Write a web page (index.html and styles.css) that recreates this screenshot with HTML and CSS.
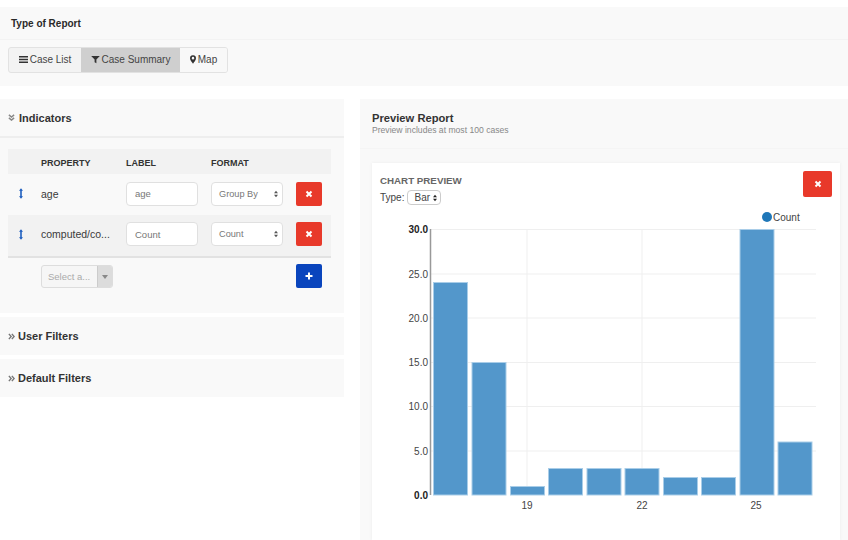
FILE: index.html
```html
<!DOCTYPE html>
<html>
    <head>
        <meta charset="utf-8">
        <title>Report Builder</title>
        <link rel="stylesheet" href="styles.css">
    </head>
    <body>
        <svg class="defs" width="0" height="0">
            <symbol id="updown" viewBox="0 0 6 10"><path d="M3 0L6 4H0zM3 10L0 6H6z"/></symbol>
            <symbol id="close" viewBox="0 0 8 8"><path d="M1.5 1.5L6.500 6.500M6.500 1.5L1.5 6.500" stroke="#fff" stroke-width="2"/></symbol>
            <symbol id="drag" viewBox="0 0 5 13"><path d="M2.5 0L5 3H3.500V10H5L2.5 13L0 10H1.500V3H0z"/></symbol>
            <symbol id="chevrons-right" viewBox="0 0 8 8"><path d="M1 1L3.600 4L1 7M4.400 1L7 4L4.400 7" fill="none" stroke="#777" stroke-width="1.600"/></symbol>
            <symbol id="chevrons-down" viewBox="0 0 8 8"><path d="M1 1L4 3.600L7 1M1 4.400L4 7L7 4.400" fill="none" stroke="#888" stroke-width="1.600"/></symbol>
        </svg>

        <div class="type-panel">
            <div class="type-head">Type of Report</div>
            <div class="type-body">
                <div class="btn-group">
                    <a class="tab tab-list">
                        <svg class="tab-icon" viewBox="0 0 10 9"><path d="M0 .5H10V2.200H0zM0 3.600H10V5.300H0zM0 6.800H10V8.500H0z"/></svg>
                        Case List
                    </a>
                    <a class="tab tab-summary active">
                        <svg class="tab-icon" viewBox="0 0 10 9"><path d="M.2 .5H9.800L6 4.400V8.800L4 7.600V4.400z"/></svg>
                        Case Summary
                    </a>
                    <a class="tab tab-map">
                        <svg class="tab-icon pin" viewBox="0 0 7 10"><path fill-rule="evenodd" d="M3.500 0A3.400 3.400 0 0 1 7 3.400C7 5.400 4.600 8.200 3.500 10 2.400 8.200 0 5.400 0 3.400A3.400 3.400 0 0 1 3.500 0zM3.500 1.900A1.500 1.500 0 1 0 3.500 4.900 1.500 1.500 0 1 0 3.500 1.900z"/></svg>
                        Map
                    </a>
                </div>
            </div>
        </div>

        <div class="main">
            <div class="left">
                <div class="section indicators">
                    <h3 class="section-head">
                        <svg class="chevrons open"><use href="#chevrons-down"/></svg>Indicators
                    </h3>
                    <div class="table">
                        <div class="row row-head">
                            <span></span>
                            <span>PROPERTY</span>
                            <span>LABEL</span>
                            <span>FORMAT</span>
                        </div>
                        <div class="row">
                            <svg class="drag"><use href="#drag"/></svg>
                            <span class="prop">age</span>
                            <input class="field" value="age">
                            <div class="field select">Group By<svg class="updown"><use href="#updown"/></svg></div>
                            <a class="btn btn-red"><svg class="btn-icon"><use href="#close"/></svg></a>
                        </div>
                        <div class="row row-alt">
                            <svg class="drag"><use href="#drag"/></svg>
                            <span class="prop">computed/co...</span>
                            <input class="field" value="Count">
                            <div class="field select">Count<svg class="updown"><use href="#updown"/></svg></div>
                            <a class="btn btn-red"><svg class="btn-icon"><use href="#close"/></svg></a>
                        </div>
                        <div class="row row-add">
                            <span></span>
                            <div class="combo">
                                <span class="combo-text">Select a...</span>
                                <span class="combo-caret"></span>
                            </div>
                            <span></span>
                            <span></span>
                            <a class="btn btn-blue">
                                <svg class="btn-icon" viewBox="0 0 8 8"><path d="M4 .5V7.500M.5 4H7.500" stroke="#fff" stroke-width="2"/></svg>
                            </a>
                        </div>
                    </div>
                </div>
                <div class="section">
                    <h3 class="section-head closed">
                        <svg class="chevrons"><use href="#chevrons-right"/></svg>User Filters
                    </h3>
                </div>
                <div class="section">
                    <h3 class="section-head closed">
                        <svg class="chevrons"><use href="#chevrons-right"/></svg>Default Filters
                    </h3>
                </div>
            </div>

            <div class="right">
                <div class="preview-head">
                    <h3>Preview Report</h3>
                    <p>Preview includes at most 100 cases</p>
                </div>
                <div class="card">
                    <div class="card-head">
                        <div class="card-left">
                            <div class="card-title">CHART PREVIEW</div>
                            <div class="type-row">
                                Type:
                                <div class="mini-select">Bar<svg class="updown dark"><use href="#updown"/></svg></div>
                            </div>
                        </div>
                        <a class="btn btn-red btn-big"><svg class="btn-icon"><use href="#close"/></svg></a>
                    </div>
                    <!-- viewBox uses page coordinates, easier to read the bars off -->
                    <svg class="chart" viewBox="372 205 468 335" width="468" height="335">
                        <circle cx="767" cy="217" r="5" fill="#1f77b8"/>
                        <text x="773" y="221" class="legend">Count</text>

                        <g class="grid">
                            <path d="M430 229.500H816M430 274H816M430 318H816M430 362.500H816M430 406.500H816M430 451H816"/>
                            <path d="M527 229V495M642 229V495M756 229V495"/>
                        </g>

                        <g class="bars">
                            <rect x="433.500" y="282.500" width="34" height="212.500"/>
                            <rect x="472" y="362.500" width="34" height="132.500"/>
                            <rect x="510.500" y="486.500" width="34" height="8.500"/>
                            <rect x="548.500" y="468.500" width="34" height="26.500"/>
                            <rect x="587" y="468.500" width="34" height="26.500"/>
                            <rect x="625" y="468.500" width="34" height="26.500"/>
                            <rect x="663.500" y="477.500" width="34" height="17.500"/>
                            <rect x="701.500" y="477.500" width="34" height="17.500"/>
                            <rect x="740" y="229.500" width="34" height="265.500"/>
                            <rect x="778" y="442" width="34" height="53"/>
                        </g>

                        <path class="axis" d="M430.500 229V495"/>

                        <g class="y-labels">
                            <text x="428" y="233" class="strong">30.0</text>
                            <text x="428" y="278">25.0</text>
                            <text x="428" y="322">20.0</text>
                            <text x="428" y="366">15.0</text>
                            <text x="428" y="410">10.0</text>
                            <text x="428" y="455">5.0</text>
                            <text x="428" y="499" class="strong">0.0</text>
                        </g>
                        <g class="x-labels">
                            <text x="527" y="509">19</text>
                            <text x="642" y="509">22</text>
                            <text x="756" y="509">25</text>
                        </g>
                    </svg>
                </div>
            </div>
        </div>
    </body>
</html>
```

FILE: styles.css
```css
*{
    margin:0px;
    padding:0px;
    box-sizing:border-box;
}
html,body{
    height:540px;
    overflow:hidden;
}
body{
    background:#fff;
    font-family:"Liberation Sans",Arial,sans-serif;
    font-size:10px;
    color:#333;
    padding-top:7px;
}
.defs{
    display:block;
    height:0;
}

/* type of report */
.type-panel{
    height:79px;
    background:#f9f9f9;
}
.type-head{
    height:33px;
    padding:11px 11px 0;
    font-size:10px;
    font-weight:bold;
    color:#2a2a2a;
    border-bottom:1px solid #f3f3f3;
}
.type-body{
    padding:7px 8px;
}
.btn-group{
    display:inline-flex;
    height:26px;
    border:1px solid #e2e2e2;
    border-radius:3px;
    background:#f3f3f3;
    overflow:hidden;
}
.tab{
    display:flex;
    align-items:center;
    justify-content:center;
    padding-bottom:1px;
    font-size:10px;
    color:#444;
}
.tab-list{
    width:72px;
}
.tab-summary{
    width:99px;
}
.tab-map{
    width:47px;
    background:#f8f8f8;
}
.tab.active{
    background:#cfcfcf;
}
.tab-icon{
    width:9px;
    height:9px;
    margin-right:2px;
    fill:#333;
}
.tab-icon.pin{
    width:6px;
}

/* two columns */
.main{
    display:flex;
    gap:16px;
    margin-top:13px;
}
.left{
    width:344px;
    display:flex;
    flex-direction:column;
    gap:4px;
}
.section{
    background:#f9f9f9;
    height:38px;
}
.section.indicators{
    height:214px;
}
.section-head{
    display:flex;
    align-items:center;
    height:39px;
    padding-left:8px;
    font-size:11px;
    font-weight:bold;
    color:#333;
    border-bottom:2px solid #eeeeee;
}
.section-head.closed{
    height:38px;
    border-bottom:none;
}
.chevrons{
    width:7px;
    height:7px;
    margin-right:3px;
}
.chevrons.open{
    margin-right:4px;
}

/* indicator table */
.table{
    margin:11px 13px 0 8px;
}
.row{
    display:grid;
    grid-template-columns:33px 85px 85px 85px 26px;
    align-items:center;
    height:41px;
    padding-bottom:2px;
    color:#3a3a3a;
}
.row-head{
    height:25px;
    padding:2px 0 0;
    background:#f2f2f2;
    font-size:9px;
    font-weight:bold;
    color:#333;
}
.row-alt{
    height:43px;
    padding-bottom:3px;
    background:#f2f2f2;
    border-bottom:2px solid #e2e2e2;
}
.row-add{
    height:36px;
    padding-bottom:0;
}
.drag{
    width:4px;
    height:11px;
    margin-left:11px;
    fill:#1f5fbf;
}
.prop{
    font-size:10.500px;
    white-space:nowrap;
}
.field{
    width:72px;
    height:24px;
    padding:0 8px;
    border:1px solid #e0e0e0;
    border-radius:4px;
    background:#fff;
    font-family:inherit;
    font-size:9.500px;
    color:#777;
}
.select{
    display:flex;
    align-items:center;
    justify-content:space-between;
    padding:0 4px 0 7px;
    font-size:9.200px;
}
.updown{
    width:4px;
    height:8px;
    fill:#555;
}
.updown.dark{
    fill:#222;
}
.btn{
    display:flex;
    align-items:center;
    justify-content:center;
    width:26px;
    height:24px;
    border-radius:2px;
}
.btn-red{
    background:#e8392a;
}
.btn-blue{
    background:#0a45bd;
}
.btn-big{
    width:29px;
    height:26px;
}
.btn-icon{
    width:8px;
    height:8px;
}
.combo{
    display:flex;
    width:72px;
    height:23px;
    border:1px solid #ddd;
    border-radius:3px;
    background:#f6f6f6;
    overflow:hidden;
}
.combo-text{
    flex:1;
    padding:5px 0 0 6px;
    font-size:9.500px;
    color:#aaa;
}
.combo-caret{
    position:relative;
    width:15px;
    background:#dcdcdc;
    border-left:1px solid #ccc;
}
.combo-caret::after{
    content:"";
    position:absolute;
    left:4px;
    top:9px;
    border:3px solid transparent;
    border-top:4px solid #888;
}

/* preview */
.right{
    flex:1;
    height:441px;
    background:#f9f9f9;
}
.preview-head{
    height:50px;
    padding:12px 12px 0;
    border-bottom:1px solid #f5f5f5;
}
.preview-head h3{
    font-size:11.200px;
    font-weight:bold;
    line-height:14px;
    color:#333;
}
.preview-head p{
    font-size:8.600px;
    line-height:11px;
    color:#888;
}
.card{
    width:468px;
    height:377px;
    margin:14px 0 0 12px;
    background:#fff;
    box-shadow:0 0 3px #ececec;
}
.card-head{
    display:flex;
    justify-content:space-between;
    height:42px;
    padding:8px;
}
.card-left{
    padding-top:4px;
}
.card-title{
    font-size:9.750px;
    font-weight:bold;
    line-height:12px;
    color:#666;
}
.type-row{
    display:flex;
    align-items:center;
    gap:3px;
    margin-top:3px;
    font-size:10px;
    color:#444;
}
.mini-select{
    display:flex;
    align-items:center;
    gap:3px;
    height:15px;
    padding:0 3px 0 6px;
    border:1px solid #ccc;
    border-radius:4px;
    color:#444;
}
.chart{
    display:block;
}
.legend{
    font-size:10px;
    fill:#444;
}
.grid path{
    fill:none;
    stroke:#efefef;
    stroke-width:1;
}
.bars rect{
    fill:#5397cb;
    stroke:#a9cde8;
    stroke-width:1;
}
.axis{
    fill:none;
    stroke:#999;
    stroke-width:1.500;
}
.y-labels text{
    font-size:10px;
    fill:#444;
    text-anchor:end;
}
.y-labels .strong{
    font-weight:bold;
    fill:#222;
}
.x-labels text{
    font-size:10px;
    fill:#444;
    text-anchor:middle;
}
```
